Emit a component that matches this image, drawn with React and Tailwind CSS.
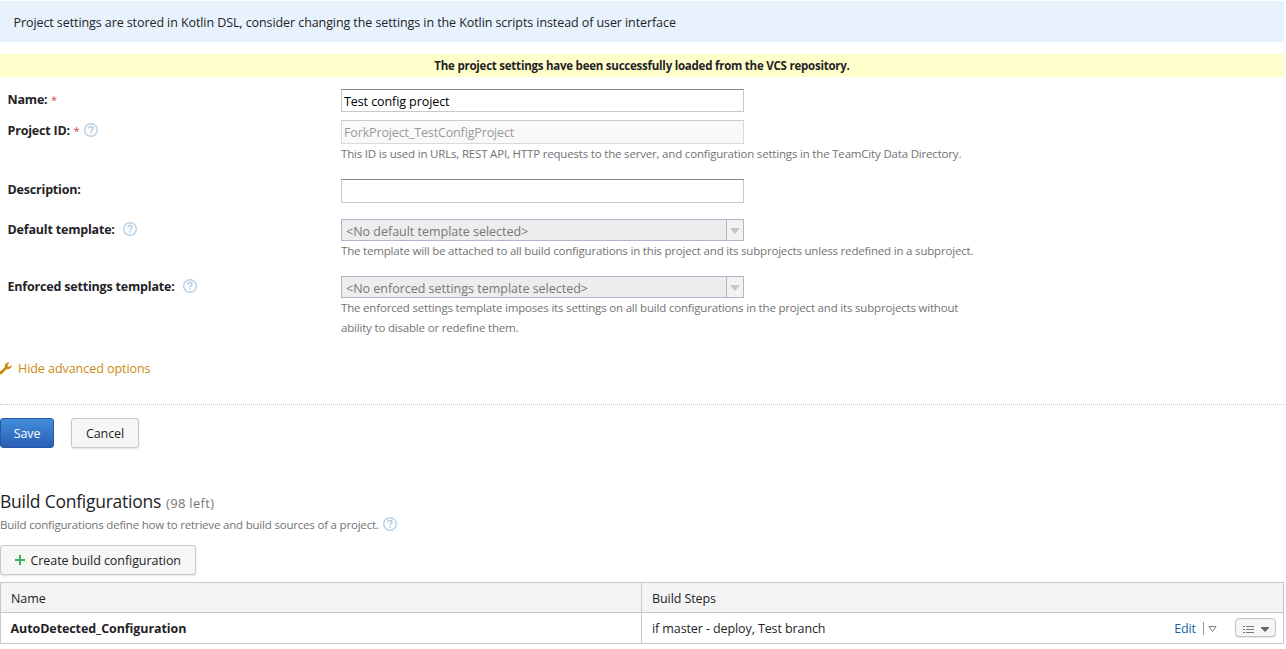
import React from "react";

function Help({ className = "" }) {
  return (
    <svg className={`h-[14px] w-[14px] shrink-0 ${className}`} viewBox="0 0 14 14" fill="none">
      <circle cx="7" cy="7" r="6.3" stroke="#b5d0e6" strokeWidth="1.4" />
      <path d="M4.900 5.500C4.900 4.300 5.900 3.600 7 3.600s2.100.7 2.100 1.700C9.100 6.600 7 6.700 7 8.400" stroke="#b5d0e6" strokeWidth="1.600" />
      <path d="M6.200 9.300h1.600v1.500H6.200z" fill="#b5d0e6" />
    </svg>
  );
}

function Row({ label, required, help, height, children }) {
  return (
    <div className={`flex items-start ${height}`}>
      <div className="flex h-[22px] w-[341px] items-center pl-[7.500px] font-bold tracking-[-0.19px]">
        <span className="pt-[2px]">{label}</span>
        {required && <span className="ml-[3.500px] pt-[2px] text-[11px] font-normal text-[#d9414b]">*</span>}
        {help && <Help className={help} />}
      </div>
      <div>{children}</div>
    </div>
  );
}

function Note({ children }) {
  return <div className="text-[11.5px] leading-5 tracking-[-0.185px] whitespace-nowrap text-[#737373]">{children}</div>;
}

function Select({ children }) {
  return (
    <div className="flex h-[22px] w-[403px] border border-[#b3b3c9] bg-[#ededed] text-[#777]">
      <div className="flex-1 pt-px pl-1 text-[12.5px] leading-[21px] tracking-[-0.01px]">{children}</div>
      <div className="flex w-[17px] items-center justify-center border-l border-[#b3b3c9] bg-[#f2f2f2]">
        <svg className="mt-px h-[6px] w-[10px]" viewBox="0 0 10 6"><path d="M0 0h10L5 6z" fill="#c6c6c6" /></svg>
      </div>
    </div>
  );
}

export default function App() {
  return (
    <div className="h-[649px] w-[1286px] overflow-hidden bg-white pt-px pr-[2px] font-['Open_Sans',sans-serif] text-[12.5px] tracking-[-0.085px] whitespace-nowrap text-[#1f2326]">
      <div className="flex h-[41px] items-center bg-[#e7f2fd] pt-[3px] pl-[13.500px]">
        <span>Project settings are stored in Kotlin DSL, consider changing the settings in the Kotlin scripts instead of user interface</span>
      </div>
      <div className="mt-3 flex h-[23px] items-center justify-center bg-[#ffffcc] text-[11.5px] font-bold tracking-[-0.235px]">
        <span>The project settings have been successfully loaded from the VCS repository.</span>
      </div>

      <div className="pt-[11px]">
        <Row label="Name:" required height="h-[31px]">
          <div className="mt-px h-[23px] w-[403px] border border-[#c8c8c8] border-t-[#878787] pt-px pl-[2px] leading-[22px] text-black">Test config project</div>
        </Row>
        <Row label="Project ID:" required help="ml-[5px]" height="h-[59px]">
          <div className="mt-px h-6 w-[403px] border border-[#dadada] border-t-[#c9c9c9] bg-[#f9f9f9] pl-[2px] leading-[23px] tracking-[-0.14px] text-[#999]">ForkProject_TestConfigProject</div>
          <Note>This ID is used in URLs, REST API, HTTP requests to the server, and configuration settings in the TeamCity Data Directory.</Note>
        </Row>
        <Row label="Description:" height="h-10">
          <div className="mt-px h-6 w-[403px] border border-[#c8c8c8] border-t-[#878787]" />
        </Row>
        <Row label="Default template:" help="ml-[8px]" height="h-[57px]">
          <div className="pt-px"><Select>&lt;No default template selected&gt;</Select></div>
          <Note>The template will be attached to all build configurations in this project and its subprojects unless redefined in a subproject.</Note>
        </Row>
        <Row label="Enforced settings template:" help="ml-[8px]" height="h-[83px]">
          <div className="pt-px"><Select>&lt;No enforced settings template selected&gt;</Select></div>
          <Note>The enforced settings template imposes its settings on all build configurations in the project and its subprojects without<br />ability to disable or redefine them.</Note>
        </Row>
      </div>

      <div className="flex h-[20px] items-center tracking-[-0.05px] text-[#c98a10]">
        <svg className="mr-[6px] h-[13px] w-[12px]" viewBox="0 0 12 13">
          <path d="M11.6 3.1 9.4 4.9 7.7 4.3 7.5 2.8 9.6.8C7.6.1 5.4 1.1 4.9 3.1c-.2.7-.1 1.3.1 1.9L0 9.7V12l1.3.5L6.700 7c2.700.9 5.300-1.100 4.900-3.900z" fill="#c98a10" />
        </svg>
        <span className="pt-[2px]">Hide advanced options</span>
      </div>
      <div className="mt-[26px] border-t border-dotted border-[#c4c4c4]" />

      <div className="mt-[13px] flex gap-[17px]">
        <button className="h-[30px] w-[54px] rounded-[3px] border border-[#2459a7] bg-linear-to-b from-[#438ddb] to-[#2b5fb6] pt-[2px] text-white">Save</button>
        <button className="h-[30px] w-[68px] rounded-[3px] border border-[#c9c9c9] bg-[#f6f6f6] pt-[2px] shadow-[0_1px_2px_rgba(0,0,0,0.12)]">Cancel</button>
      </div>

      <div className="mt-[40px] flex h-[27px] items-baseline">
        <span className="text-[17.5px] leading-[26px] tracking-[-0.25px]">Build Configurations</span>
        <span className="ml-[5px] text-[13px] tracking-[0.3px] text-[#777]">(98 left)</span>
      </div>
      <div className="flex h-[18px] items-center text-[11.5px] tracking-[-0.195px] text-[#737373]">
        <span className="pt-px">Build configurations define how to retrieve and build sources of a project.</span>
        <Help className="ml-[4.500px]" />
      </div>

      <button className="mt-3 flex h-[30px] w-[196px] items-center rounded-[3px] border border-[#c9c9c9] bg-[#f6f6f6] pl-[14px] shadow-[0_1px_2px_rgba(0,0,0,0.12)]">
        <svg className="mr-[5.500px] h-[10px] w-[10px]" viewBox="0 0 10 10"><path d="M5 0v10M0 5h10" stroke="#35b35a" strokeWidth="2" /></svg>
        <span className="pt-[2px] tracking-[-0.06px]">Create build configuration</span>
      </button>

      <div className="mt-[7px] border border-[#c9c9c9]">
        <div className="flex h-[30px] items-center border-b border-[#c9c9c9] bg-[#f4f4f4]">
          <div className="flex h-full w-[641px] items-center border-r border-[#c9c9c9] pt-[3px] pl-[10px]">Name</div>
          <div className="pt-[3px] pl-[10px]">Build Steps</div>
        </div>
        <div className="flex h-[30px] items-center">
          <div className="flex h-full w-[641px] items-center border-r border-[#c9c9c9] pt-[2px] pl-[9.500px] font-bold"><span>AutoDetected_Configuration</span></div>
          <div className="flex-1 pt-[2px] pl-[10px] tracking-[-0.1px]">if master - deploy, Test branch</div>
          <span className="pt-[2px] text-[#1a5fad]">Edit</span>
          <div className="ml-[7px] h-[13px] w-px bg-[#999]" />
          <svg className="mt-[2px] ml-1 h-[8px] w-[9px]" viewBox="0 0 9 8" fill="none"><path d="M.9 1.500h7.200L4.500 6.600z" stroke="#808080" /></svg>
          <div className="-mt-px mr-[7px] ml-[18px] flex h-[19px] w-[41px] items-center rounded-[4px] border border-[#c2c2c2] bg-[#f6f6f6] pt-[3px] pl-[7px] shadow-[0_1px_1px_rgba(0,0,0,0.1)]">
            <svg className="h-[9px] w-[11px]" viewBox="0 0 11 9"><path d="M0 1.500h2M0 4.500h2M0 7.500h2M3 1.500h8M3 4.500h8M3 7.500h8" stroke="#777" /></svg>
            <svg className="ml-[7px] h-[5px] w-[8px]" viewBox="0 0 8 5"><path d="M0 0h8v1L4 5 0 1z" fill="#666" /></svg>
          </div>
        </div>
      </div>
    </div>
  );
}
